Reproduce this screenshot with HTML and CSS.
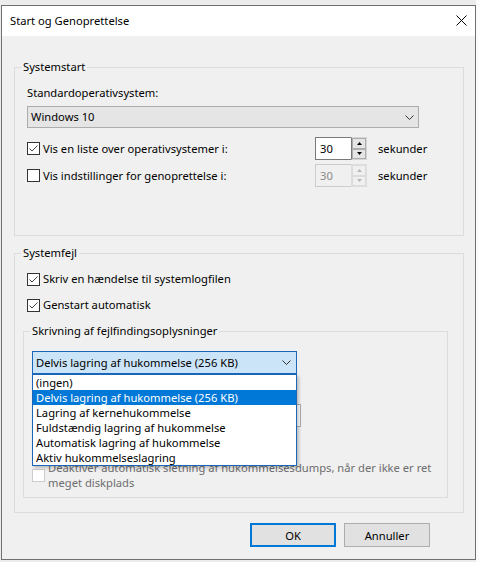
FILE: index.html
```html
<!DOCTYPE html>
<html lang="da">
<head>
<meta charset="utf-8">
<title>Start og Genoprettelse</title>
<link rel="stylesheet" href="styles.css">
</head>
<body>
<div class="window">
  <div class="titlebar">
    <span class="title">Start og Genoprettelse</span>
    <svg class="close" width="11" height="11" viewBox="0 0 11 11"><path d="M0.5 0.5 L10.5 10.5 M10.5 0.5 L0.5 10.5" stroke="#000" stroke-width="1" fill="none"/></svg>
  </div>
  <div class="content">
    <fieldset class="group g1">
      <legend>Systemstart</legend>
      <div class="gbody g1-body">
        <div class="label">Standardoperativsystem:</div>
        <div class="combo os">
          <span>Windows 10</span>
          <svg class="chev" width="9" height="5" viewBox="0 0 9 5"><path d="M0.5 0.5 L4.5 4.5 L8.5 0.5" fill="none" stroke="#333" stroke-width="1"/></svg>
        </div>
        <div class="timerow first">
          <div class="checkline">
            <svg class="cb" width="13" height="13" viewBox="0 0 13 13"><rect x="0.5" y="0.5" width="12" height="12" fill="#fff" stroke="#333"/><path d="M2.5 6.5 L5 9 L10.5 3.5" fill="none" stroke="#444" stroke-width="1"/></svg>
            <span>Vis en liste over operativsystemer i:</span>
          </div>
          <div class="spin">
            <div class="spin-edit">30</div>
            <div class="spin-btns">
              <div class="spin-btn"><svg width="5" height="3" viewBox="0 0 5 3"><path d="M2.5 0 L5 3 H0 Z" fill="#000"/></svg></div>
              <div class="spin-btn"><svg width="5" height="3" viewBox="0 0 5 3"><path d="M0 0 H5 L2.5 3 Z" fill="#000"/></svg></div>
            </div>
          </div>
          <span class="sek">sekunder</span>
        </div>
        <div class="timerow second">
          <div class="checkline">
            <svg class="cb" width="13" height="13" viewBox="0 0 13 13"><rect x="0.5" y="0.5" width="12" height="12" fill="#fff" stroke="#333"/></svg>
            <span>Vis indstillinger for genoprettelse i:</span>
          </div>
          <div class="spin disabled">
            <div class="spin-edit">30</div>
            <div class="spin-btns">
              <div class="spin-btn"><svg width="5" height="3" viewBox="0 0 5 3"><path d="M2.5 0 L5 3 H0 Z" fill="#b5b5b5"/></svg></div>
              <div class="spin-btn"><svg width="5" height="3" viewBox="0 0 5 3"><path d="M0 0 H5 L2.5 3 Z" fill="#b5b5b5"/></svg></div>
            </div>
          </div>
          <span class="sek">sekunder</span>
        </div>
      </div>
    </fieldset>

    <fieldset class="group g2">
      <legend>Systemfejl</legend>
      <div class="gbody g2-body">
        <div class="checkrow">
          <svg class="cb" width="13" height="13" viewBox="0 0 13 13"><rect x="0.5" y="0.5" width="12" height="12" fill="#fff" stroke="#333"/><path d="M2.5 6.5 L5 9 L10.5 3.5" fill="none" stroke="#444" stroke-width="1"/></svg>
          <span>Skriv en hændelse til systemlogfilen</span>
        </div>
        <div class="checkrow second">
          <svg class="cb" width="13" height="13" viewBox="0 0 13 13"><rect x="0.5" y="0.5" width="12" height="12" fill="#fff" stroke="#333"/><path d="M2.5 6.5 L5 9 L10.5 3.5" fill="none" stroke="#444" stroke-width="1"/></svg>
          <span>Genstart automatisk</span>
        </div>

        <fieldset class="group g3">
          <legend>Skrivning af fejlfindingsoplysninger</legend>
          <div class="gbody g3-body">
            <div class="combo-wrap">
              <div class="combo debug">
                <span>Delvis lagring af hukommelse (256 KB)</span>
                <svg class="chev" width="9" height="5" viewBox="0 0 9 5"><path d="M0.5 0.5 L4.5 4.5 L8.5 0.5" fill="none" stroke="#333" stroke-width="1"/></svg>
              </div>
              <ul class="droplist">
                <li>(ingen)</li>
                <li class="selected">Delvis lagring af hukommelse (256 KB)</li>
                <li>Lagring af kernehukommelse</li>
                <li>Fuldstændig lagring af hukommelse</li>
                <li>Automatisk lagring af hukommelse</li>
                <li>Aktiv hukommelseslagring</li>
              </ul>
            </div>
            <div class="dump-space"></div>
            <div class="editbox"></div>
            <div class="overwrite-space"></div>
            <div class="checkrow disabled multi">
              <svg class="cb" width="13" height="13" viewBox="0 0 13 13"><rect x="0.5" y="0.5" width="12" height="12" fill="#fff" stroke="#cccccc"/></svg>
              <span>Deaktiver automatisk sletning af hukommelsesdumps, når der ikke er ret<br>meget diskplads</span>
            </div>
          </div>
        </fieldset>
      </div>
    </fieldset>

    <div class="buttons">
      <button class="btn default">OK</button>
      <button class="btn">Annuller</button>
    </div>
  </div>
</div>
</body>
</html>
```

FILE: styles.css
```css
* {
  box-sizing: border-box;
}

html, body {
  margin: 0;
  padding: 0;
}

body {
  width: 479px;
  height: 562px;
  overflow: hidden;
  background: linear-gradient(to right, #ececec 476px, #fbfbfb 476px);
  font-family: "Noto Sans", "Open Sans", sans-serif;
  font-size: 11.2px;
  color: #000;
}

.window {
  margin: 5px 0 0 1px;
  width: 475px;
  height: 555px;
  border: 1px solid #707070;
  background: #f0f0f0;
  display: flex;
  flex-direction: column;
}

.titlebar {
  height: 30px;
  flex: none;
  background: #fff;
  display: flex;
  align-items: center;
  justify-content: space-between;
  padding: 0 8px 0 8px;
}

.title {
  line-height: 16px;
}

.close {
  display: block;
  margin-top: -1px;
}

.content {
  flex: 1;
  padding: 23px 11px 0 12px;
  display: flex;
  flex-direction: column;
}

.group {
  margin: 0;
  padding: 0;
  border: 1px solid #dcdcdc;
  min-width: 0;
}

.group legend {
  margin-left: 6px;
  padding: 0 2px;
  line-height: 16px;
  font-size: 11.2px;
}

.label {
  line-height: 16px;
}

.g1-body {
  padding: 10px 0 48px 12px;
}

.combo {
  display: flex;
  align-items: center;
  justify-content: space-between;
  border: 1px solid #adadad;
  background: #e5e5e5;
  padding: 0 4px 0 3px;
  line-height: 16px;
}

.chev {
  display: block;
  flex: none;
}

.combo.os {
  margin-top: 5px;
  width: 392px;
  height: 22px;
}

.timerow {
  display: flex;
  align-items: center;
  height: 23px;
}

.timerow.first {
  margin-top: 9px;
}

.timerow.second {
  margin-top: 4px;
}

.checkline {
  width: 288px;
  display: flex;
  align-items: center;
  gap: 3px;
  line-height: 16px;
}

.cb {
  display: block;
  flex: none;
}

.spin {
  display: flex;
  width: 52px;
  height: 23px;
  flex: none;
}

.spin-edit {
  width: 36px;
  border: 1px solid #7a7a7a;
  border-right: 0;
  background: #fff;
  padding-left: 4px;
  line-height: 21px;
}

.spin-btns {
  width: 16px;
  display: flex;
  flex-direction: column;
  border: 1px solid #d4d4d4;
  border-left-color: #7a7a7a;
  background: #fff;
}

.spin-btn {
  flex: 1;
  display: flex;
  align-items: center;
  justify-content: center;
  border: 1px solid #adadad;
  background: #e5e5e5;
}

.spin.disabled .spin-edit {
  border-color: #cccccc;
  color: #8a8a8a;
  background: #f0f0f0;
}

.spin.disabled .spin-btns {
  border-color: #dedede;
  background: #f0f0f0;
}

.spin.disabled .spin-btn {
  border-color: #dcdcdc;
  background: #f0f0f0;
}

.sek {
  margin-left: 11px;
  line-height: 16px;
}

.g2 {
  margin-top: 9px;
}

.g2-body {
  padding: 10px 0 14px 8px;
}

.checkrow {
  display: flex;
  align-items: center;
  gap: 3px;
  line-height: 16px;
  padding-left: 4px;
}

.checkrow.second {
  margin-top: 10px;
}

.g3 {
  margin: 10px 15px 0 0;
}

.g3-body {
  padding: 12px 0 7px 8px;
}

.g3-body .checkrow {
  padding-left: 0;
}

.combo-wrap {
  position: relative;
  width: 265px;
  z-index: 2;
}

.combo.debug {
  height: 23px;
  background: #cce4f7;
  border-color: #1a66b8;
  padding-right: 5px;
}

.droplist {
  position: absolute;
  top: 100%;
  left: 0;
  width: 265px;
  margin: 0;
  padding: 0;
  list-style: none;
  background: #fff;
  border: 1px solid #1a66b8;
  box-shadow: 2px 2px 3px rgba(0, 0, 0, 0.22);
}

.droplist li {
  height: 15px;
  line-height: 15px;
  padding: 0 3px;
  white-space: nowrap;
}

.droplist li.selected {
  background: #0078d7;
  color: #fff;
}

.dump-space {
  height: 30px;
}

.editbox {
  width: 269px;
  height: 23px;
  border: 1px solid #adadad;
  background: #fff;
}

.overwrite-space {
  height: 22px;
}

.checkrow.multi {
  margin-top: 11px;
  line-height: 15px;
}

.checkrow.disabled {
  color: #6d6d6d;
}

.buttons {
  display: flex;
  justify-content: flex-end;
  gap: 8px;
  margin-top: 10px;
  padding-right: 34px;
}

.btn {
  width: 86px;
  height: 24px;
  border: 1px solid #adadad;
  background: #e1e1e1;
  font-family: inherit;
  font-size: 11.2px;
  color: #000;
  padding: 0;
  margin: 0;
}

.btn.default {
  border: 2px solid #0078d7;
}
```
